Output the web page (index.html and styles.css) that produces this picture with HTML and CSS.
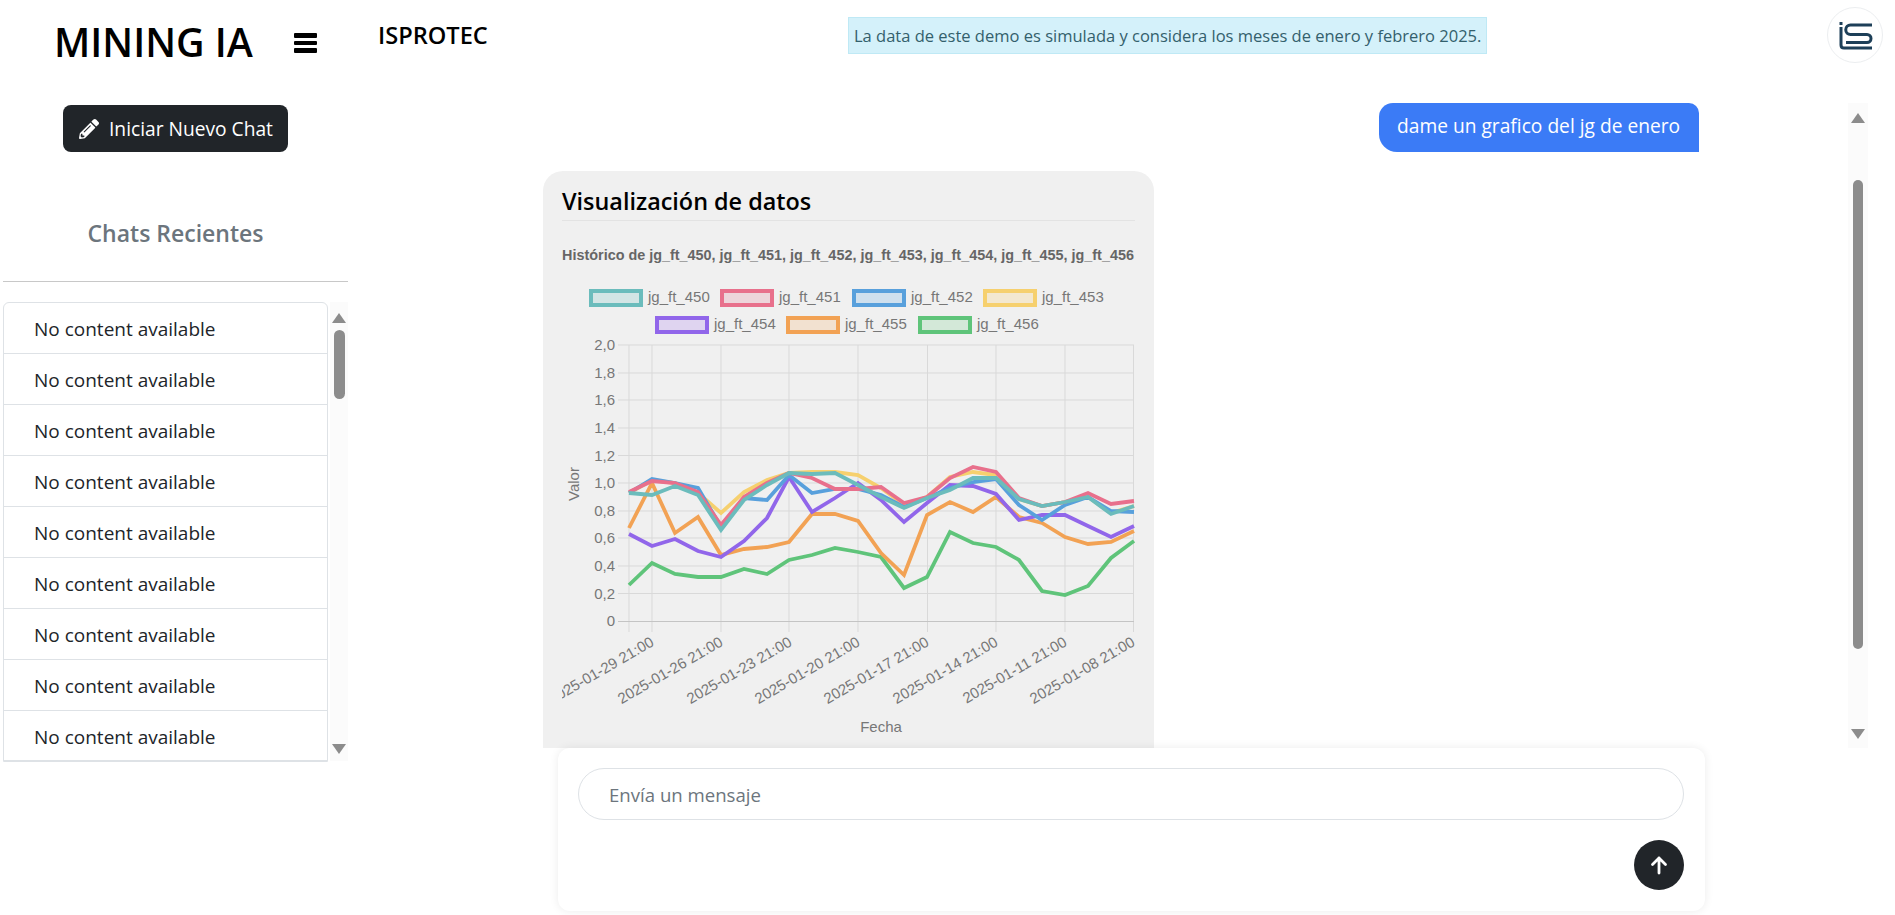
FILE: index.html
```html
<!DOCTYPE html>
<html lang="es">

<head>
    <meta charset="UTF-8">
    <meta name="viewport" content="width=device-width, initial-scale=1.0">
    <title>Mining IA</title>

    <link rel="stylesheet" href="styles.css">
</head>

<body>
    <header class="topbar">
        <div class="brand">MINING IA</div>
        <div class="burger"><span></span><span></span><span></span></div>
        <div class="company">ISPROTEC</div>
        <div class="notice">La data de este demo es simulada y considera los meses de enero y febrero 2025.</div>
        <div class="avatar">
            <svg width="36" height="30" viewBox="0 0 36 30">
                <path d="M2.5 2h3v3h-3z" fill="#1d3f58" />
                <path d="M4 7v18q0 3 3 3h28M35 5H13.5a4.75 4.75 0 0 0 0 9.500H30a4 4 0 0 1 0 8H9" fill="none" stroke="#1d3f58" stroke-width="3" />
            </svg>
        </div>
    </header>

    <div class="layout">
        <aside class="sidebar">
            <button class="new-chat">
                <svg width="20" height="20" viewBox="0 0 512 512">
                    <path fill="#fff" d="M497.9 142.1l-46.1 46.1c-4.7 4.7-12.3 4.7-17 0l-111-111c-4.7-4.7-4.7-12.3 0-17l46.1-46.1c18.7-18.7 49.1-18.7 67.9 0l60.1 60.1c18.8 18.7 18.8 49.1 0 67.9zM284.2 99.8L21.6 362.4.4 483.9c-2.9 16.4 11.4 30.6 27.8 27.8l121.5-21.3 262.6-262.6c4.7-4.7 4.7-12.3 0-17l-111-111c-4.8-4.7-12.4-4.7-17.1 0zM124.1 339.9c-5.5-5.5-5.5-14.3 0-19.8l154-154c5.5-5.5 14.3-5.5 19.8 0s5.5 14.3 0 19.8l-154 154c-5.5 5.5-14.3 5.5-19.8 0zM88 424h48v36.3l-64.5 11.3-31.1-31.1L51.7 376H88v48z" />
                </svg>
                Iniciar Nuevo Chat
            </button>
            <h2 class="recent-title">Chats Recientes</h2>
            <hr class="recent-line">
            <div class="recent-wrap">
                <ul class="recent-list">
                    <li>No content available</li>
                    <li>No content available</li>
                    <li>No content available</li>
                    <li>No content available</li>
                    <li>No content available</li>
                    <li>No content available</li>
                    <li>No content available</li>
                    <li>No content available</li>
                    <li>No content available</li>
                </ul>
                <div class="rail rail-side">
                    <i class="arrow-up"></i>
                    <b class="thumb"></b>
                    <i class="arrow-down"></i>
                </div>
            </div>
        </aside>

        <main class="main">
            <div class="chat-wrap">
                <div class="messages">
                    <div class="bubble">dame un grafico del jg de enero</div>
                    <div class="chart-card">
                        <h3 class="chart-heading">Visualización de datos</h3>

                        <!-- los puntos salen de la data del demo, coordenadas en px de la pagina -->
                        <svg class="chart" width="573" height="520" viewBox="562 230 573 520">
                            <text class="chart-title" x="848" y="260" text-anchor="middle">Histórico de jg_ft_450, jg_ft_451, jg_ft_452, jg_ft_453, jg_ft_454, jg_ft_455, jg_ft_456</text>

                            <g class="legend-box">
                                <rect x="591" y="291" width="50" height="14" stroke="#6bbcbc" fill="#d3e5e5" />
                                <rect x="722" y="291" width="50" height="14" stroke="#e8708c" fill="#edd5db" />
                                <rect x="854" y="291" width="50" height="14" stroke="#58a0dc" fill="#cfe0ee" />
                                <rect x="985" y="291" width="50" height="14" stroke="#f6d06e" fill="#f3e8d0" />
                                <rect x="657" y="318" width="50" height="14" stroke="#9166ea" fill="#dfd4f0" />
                                <rect x="788" y="318" width="50" height="14" stroke="#f2a254" fill="#f2e1d0" />
                                <rect x="920" y="318" width="50" height="14" stroke="#5fc47a" fill="#d3e8d8" />
                            </g>
                            <g class="axis-text">
                                <text x="648" y="302">jg_ft_450</text>
                                <text x="779" y="302">jg_ft_451</text>
                                <text x="911" y="302">jg_ft_452</text>
                                <text x="1042" y="302">jg_ft_453</text>
                                <text x="714" y="329">jg_ft_454</text>
                                <text x="845" y="329">jg_ft_455</text>
                                <text x="977" y="329">jg_ft_456</text>
                            </g>

                            <g class="grid">
                                <path d="M618 345H1134M618 373H1134M618 400H1134M618 428H1134M618 455.5H1134M618 483H1134M618 511H1134M618 538H1134M618 566H1134M618 593.5H1134" />
                                <path d="M629 345V632M652 345V632M721 345V632M789 345V632M858 345V632M927.5 345V632M996 345V632M1065 345V632M1133.5 345V632" />
                            </g>
                            <path class="grid-zero" d="M618 621.5H1134" />

                            <g class="axis-text" text-anchor="end">
                                <text x="615" y="350">2,0</text>
                                <text x="615" y="378">1,8</text>
                                <text x="615" y="405">1,6</text>
                                <text x="615" y="433">1,4</text>
                                <text x="615" y="461">1,2</text>
                                <text x="615" y="488">1,0</text>
                                <text x="615" y="516">0,8</text>
                                <text x="615" y="543">0,6</text>
                                <text x="615" y="571">0,4</text>
                                <text x="615" y="599">0,2</text>
                                <text x="615" y="626">0</text>
                            </g>

                            <text class="axis-text" transform="translate(579 484) rotate(-90)" text-anchor="middle">Valor</text>

                            <g class="axis-text" text-anchor="end">
                                <text transform="translate(655 645) rotate(-30)">2025-01-29 21:00</text>
                                <text transform="translate(724 645) rotate(-30)">2025-01-26 21:00</text>
                                <text transform="translate(793 645) rotate(-30)">2025-01-23 21:00</text>
                                <text transform="translate(861 645) rotate(-30)">2025-01-20 21:00</text>
                                <text transform="translate(930 645) rotate(-30)">2025-01-17 21:00</text>
                                <text transform="translate(999 645) rotate(-30)">2025-01-14 21:00</text>
                                <text transform="translate(1068 645) rotate(-30)">2025-01-11 21:00</text>
                                <text transform="translate(1136 645) rotate(-30)">2025-01-08 21:00</text>
                            </g>
                            <text class="axis-text" x="881" y="732" text-anchor="middle">Fecha</text>

                            <g class="series">
                                <polyline stroke="#5fc47a" points="629,585 652,563 675,574 698,577 721,577 744,569 767,574 789,560 812,555 835,548 858,552 881,557 904,588 927,577 950,532 973,543 996,547 1019,560 1042,591 1065,595 1088,586 1111,558 1134,541" />
                                <polyline stroke="#f2a254" points="629,528 652,483 675,533 698,517 721,555 744,549 767,547 789,542 812,514 835,514 858,521 881,553 904,575 927,515 950,502 973,512 996,497 1019,517 1042,523 1065,537 1088,544 1111,542 1134,531" />
                                <polyline stroke="#9166ea" points="629,534 652,546 675,539 698,551 721,557 744,541 767,518 789,477 812,512 835,498 858,483 881,500 904,522 927,503 950,485 973,486 996,494 1019,520 1042,515 1065,515 1088,526 1111,537 1134,526" />
                                <polyline stroke="#f6d06e" points="629,493 652,480 675,483 698,493 721,513 744,492 767,480 789,473 812,472 835,472 858,475 881,488 904,505 927,497 950,477 973,472 996,475 1019,499 1042,506 1065,502 1088,497 1111,513 1134,506" />
                                <polyline stroke="#58a0dc" points="629,493 652,479 675,483 698,488 721,527 744,498 767,500 789,475 812,493 835,489 858,489 881,495 904,507 927,498 950,488 973,482 996,479 1019,505 1042,520 1065,505 1088,497 1111,511 1134,512" />
                                <polyline stroke="#e8708c" points="629,492 652,481 675,483 698,492 721,525 744,497 767,483 789,473 812,478 835,489 858,489 881,487 904,503 927,497 950,478 973,467 996,472 1019,498 1042,506 1065,502 1088,493 1111,504 1134,501" />
                                <polyline stroke="#6bbcbc" points="629,493 652,495 675,486 698,495 721,530 744,500 767,485 789,473 812,474 835,473 858,485 881,497 904,508 927,498 950,490 973,478 996,478 1019,499 1042,506 1065,502 1088,497 1111,514 1134,506" />
                            </g>
                        </svg>
                    </div>
                </div>
                <div class="rail rail-main">
                    <i class="arrow-up"></i>
                    <b class="thumb"></b>
                    <i class="arrow-down"></i>
                </div>
            </div>

            <form class="composer">
                <input class="composer-input" type="text" placeholder="Envía un mensaje">
                <button class="send" type="button">
                    <svg width="22" height="22" viewBox="0 0 22 22">
                        <path d="M11 19V4M4.5 10.5L11 4l6.5 6.5" fill="none" stroke="#fff" stroke-width="2.8" stroke-linecap="round" stroke-linejoin="round" />
                    </svg>
                </button>
            </form>
        </main>
    </div>
</body>

</html>
```

FILE: styles.css
```css
* {
    margin: 0;
    padding: 0;
    box-sizing: border-box;
}

body {
    height: 915px;
    overflow: hidden;
    background-color: #fff;
    color: #212529;
    font-family: "Open Sans", "Noto Sans", sans-serif;
}

/* barra superior */
.topbar {
    display: flex;
    align-items: flex-start;
    height: 103px;
    padding-left: 54px;
}

.brand {
    width: 240px;
    margin-top: 16px;
    font-size: 39.4px;
    line-height: 52px;
    font-weight: 600;
    color: #000;
    white-space: nowrap;
}

.burger {
    display: flex;
    flex-direction: column;
    gap: 3px;
    width: 23px;
    margin-top: 33px;
}

.burger span {
    height: 4.5px;
    border-radius: 1px;
    background-color: #000;
}

.company {
    width: 469px;
    margin-top: 18px;
    margin-left: 61px;
    font-size: 23.6px;
    line-height: 34px;
    font-weight: 600;
    color: #000;
}

.notice {
    margin-top: 17px;
    margin-left: 1px;
    padding: 0 5px;
    height: 37px;
    line-height: 35px;
    font-size: 16.5px;
    background-color: #d4f1fa;
    border: 1px solid #bfe9f5;
    color: #33606c;
    white-space: nowrap;
}

.avatar {
    display: flex;
    align-items: center;
    justify-content: center;
    width: 56px;
    height: 56px;
    margin-top: 7px;
    margin-left: auto;
    margin-right: 12px;
    border: 1px solid #eceef0;
    border-radius: 50%;
}

/* cuerpo */
.layout {
    display: grid;
    grid-template-columns: 350px 1fr;
    height: 812px;
}

/* barra lateral */
.sidebar {
    display: flex;
    flex-direction: column;
    align-items: flex-start;
    padding-left: 3px;
    padding-top: 2px;
}

.new-chat {
    display: flex;
    align-items: center;
    gap: 10px;
    width: 225px;
    height: 47px;
    margin-left: 60px;
    padding-left: 16px;
    background-color: #212529;
    border: none;
    border-radius: 8px;
    color: #fff;
    font-family: inherit;
    font-size: 19.2px;
}

.recent-title {
    width: 345px;
    margin-top: 65px;
    text-align: center;
    font-size: 23px;
    line-height: 32px;
    font-weight: 600;
    color: #6c757d;
}

.recent-line {
    width: 345px;
    margin-top: 32px;
    border: none;
    border-top: 1px solid #c8c8c8;
}

.recent-wrap {
    display: flex;
    gap: 2px;
    margin-top: 20px;
}

.recent-list {
    width: 325px;
    list-style: none;
    border: 1px solid #dee2e6;
    border-radius: 6px 6px 0 0;
}

.recent-list li {
    height: 51px;
    padding-top: 2px;
    padding-left: 30px;
    line-height: 48px;
    font-size: 19px;
    border-bottom: 1px solid #dee2e6;
}

.recent-list li:last-child {
    height: 50px;
}

/* barras de scroll */
.rail {
    display: flex;
    flex-direction: column;
    align-items: center;
    background-color: #fbfbfb;
}

.arrow-up,
.arrow-down {
    width: 0;
    height: 0;
    border-left: 7px solid transparent;
    border-right: 7px solid transparent;
}

.arrow-up {
    border-bottom: 10px solid #8c8c8c;
}

.arrow-down {
    margin-top: auto;
    border-top: 10px solid #8c8c8c;
}

.thumb {
    display: block;
    background-color: #8c8c8c;
    border-radius: 6px;
}

.rail-side {
    width: 18px;
    height: 459px;
    padding: 11px 0 7px;
}

.rail-side .thumb {
    width: 11px;
    height: 69px;
    margin-top: 7px;
}

.rail-main {
    width: 20px;
    height: 645px;
    padding: 10px 0 9px;
}

.rail-main .thumb {
    width: 10px;
    height: 469px;
    margin-top: 57px;
}

/* chat */
.main {
    display: flex;
    flex-direction: column;
    min-width: 0;
}

.chat-wrap {
    display: flex;
    height: 645px;
}

.messages {
    width: 1498px;
    height: 645px;
    overflow: hidden;
    padding-left: 193px;
}

.bubble {
    width: 320px;
    height: 49px;
    margin-left: 836px;
    padding-left: 18px;
    background-color: #3b7bf6;
    border-radius: 14px 10px 0 18px;
    color: #fff;
    font-size: 19.2px;
    line-height: 45px;
    white-space: nowrap;
}

.chart-card {
    width: 611px;
    margin-top: 19px;
    padding: 13px 19px 30px;
    background-color: #f0f0f0;
    border-radius: 20px;
}

.chart-heading {
    height: 37px;
    font-size: 23.4px;
    line-height: 34px;
    font-weight: 600;
    color: #000;
    border-bottom: 1px solid #e3e3e3;
}

.chart {
    display: block;
    margin-top: 9px;
    font-family: "Liberation Sans", Arial, sans-serif;
}

.chart-title {
    font-size: 14.4px;
    font-weight: bold;
    fill: #666;
}

.axis-text {
    font-size: 15px;
    fill: #777;
}

.legend-box rect {
    stroke-width: 4;
}

.grid {
    fill: none;
    stroke: #d9d9d9;
    stroke-width: 1;
}

.grid-zero {
    stroke: #c4c4c4;
    stroke-width: 1;
}

.series polyline {
    fill: none;
    stroke-width: 3.8;
    stroke-linejoin: miter;
}

/* caja de mensaje */
.composer {
    display: flex;
    flex-direction: column;
    align-items: flex-end;
    gap: 20px;
    width: 1147px;
    height: 163px;
    margin-left: 208px;
    padding: 20px 21px 0 20px;
    background-color: #fff;
    border-radius: 12px;
    box-shadow: 0 0 10px rgba(0, 0, 0, 0.08);
    position: relative;
}

.composer-input {
    width: 100%;
    height: 52px;
    padding-top: 1px;
    padding-left: 30px;
    border: 1px solid #dee2e6;
    border-radius: 26px;
    font-family: inherit;
    font-size: 18.6px;
    color: #212529;
    outline: none;
}

.composer-input::placeholder {
    color: #6c757d;
}

.send {
    display: flex;
    align-items: center;
    justify-content: center;
    width: 50px;
    height: 50px;
    background-color: #212529;
    border: none;
    border-radius: 50%;
}
```
